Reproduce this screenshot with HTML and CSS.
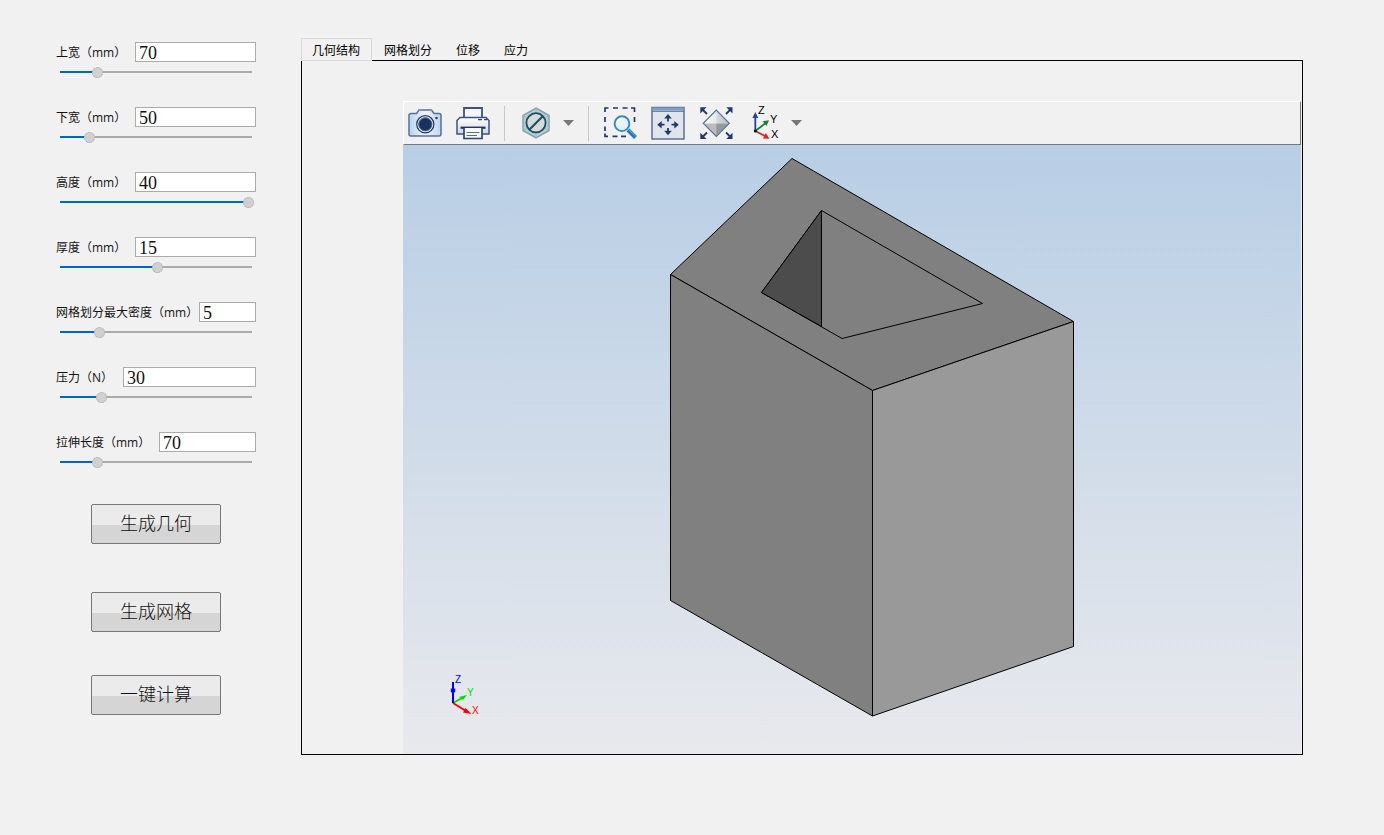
FILE: index.html
```
<!DOCTYPE html>
<html lang="zh-CN">
<head>
<meta charset="utf-8">
<title>几何结构</title>
<link rel="stylesheet" href="styles.css">
</head>
<body>
<div class="app">
  <form class="sidebar">
    <div class="fields">
      <div class="field">
        <div class="row"><label for="top">上宽（mm）</label><input class="value wide" id="top" type="text" value="70"></div>
        <input class="slider" type="range" aria-label="上宽" value="19" style="--v:19">
      </div>
      <div class="field">
        <div class="row"><label for="bottom">下宽（mm）</label><input class="value wide" id="bottom" type="text" value="50"></div>
        <input class="slider" type="range" aria-label="下宽" value="15" style="--v:15">
      </div>
      <div class="field">
        <div class="row"><label for="height">高度（mm）</label><input class="value wide" id="height" type="text" value="40"></div>
        <input class="slider" type="range" aria-label="高度" value="99" style="--v:99">
      </div>
      <div class="field">
        <div class="row"><label for="thick">厚度（mm）</label><input class="value wide" id="thick" type="text" value="15"></div>
        <input class="slider" type="range" aria-label="厚度" value="51" style="--v:51">
      </div>
      <div class="field">
        <div class="row"><label for="mesh">网格划分最大密度（mm）</label><input class="value narrow" id="mesh" type="text" value="5"></div>
        <input class="slider" type="range" aria-label="网格划分最大密度" value="20" style="--v:20">
      </div>
      <div class="field">
        <div class="row"><label for="force">压力（N）</label><input class="value widest" id="force" type="text" value="30"></div>
        <input class="slider" type="range" aria-label="压力" value="21" style="--v:21">
      </div>
      <div class="field">
        <div class="row"><label for="length">拉伸长度（mm）</label><input class="value medium" id="length" type="text" value="70"></div>
        <input class="slider" type="range" aria-label="拉伸长度" value="19" style="--v:19">
      </div>
    </div>
    <div class="actions">
      <button class="action" type="button">生成几何</button>
      <button class="action" type="button">生成网格</button>
      <button class="action compute" type="button">一键计算</button>
    </div>
  </form>

  <main class="main">
    <div class="tabs" role="tablist">
      <button class="tab active" role="tab" aria-selected="true" type="button">几何结构</button>
      <button class="tab" role="tab" type="button">网格划分</button>
      <button class="tab" role="tab" type="button">位移</button>
      <button class="tab" role="tab" type="button">应力</button>
    </div>
    <section class="panel">
      <div class="toolbar">
        <button class="tool" type="button" aria-label="截图">
          <svg viewBox="408 106 34 34">
            <defs><linearGradient id="cam" x1="0" y1="0" x2="1" y2="0"><stop offset="0" stop-color="#b9d3ee"/><stop offset=".5" stop-color="#f0f6fc"/><stop offset="1" stop-color="#bdd5ee"/></linearGradient></defs>
            <path d="M411 113.500H416.500L419 110H431.500L434 113.500H439Q441 113.500 441 115.500V134Q441 136 439 136H411Q409 136 409 134V115.500Q409 113.500 411 113.500Z" fill="url(#cam)" stroke="#5a6f9c" stroke-width="1.500"/>
            <path d="M418.500 110H432" stroke="#8490ae" stroke-width="1.800"/>
            <circle cx="425.300" cy="124.300" r="8.600" fill="#e6eef8" stroke="#1d355f" stroke-width="1.200"/>
            <circle cx="425.300" cy="124.300" r="6.600" fill="#1b315f" stroke="#4a6794"/>
            <circle cx="436.500" cy="118" r="1.300" fill="#2a4172"/>
          </svg>
        </button>
        <button class="tool" type="button" aria-label="打印">
          <svg viewBox="456 106 34 34">
            <defs><linearGradient id="prn" x1="0" y1="0" x2="0" y2="1"><stop offset="0" stop-color="#fff"/><stop offset="1" stop-color="#cfd5df"/></linearGradient></defs>
            <path d="M464 108H482V118H464Z" fill="#f4f7fb" stroke="#3c5180" stroke-width="1.800"/>
            <path d="M460 117.500H486L489 120.500V134H457V120.500Z" fill="url(#prn)" stroke="#3c5180" stroke-width="1.500"/>
            <path d="M460.500 127.700H485.500" stroke="#1f3566" stroke-width="2.200"/>
            <path d="M464 128V138.500H482V128" fill="#f5f7fa" stroke="#2f4574" stroke-width="1.700"/>
            <path d="M466.500 132.500H479.500M466.500 135.500H477" stroke="#5a6d94"/>
            <path d="M478 119.700H482M484 119.700H487" stroke="#33466e" stroke-width="1.200"/>
          </svg>
        </button>
        <span class="sep"></span>
        <div class="split">
          <button class="tool" type="button" aria-label="剪切面">
            <svg viewBox="519 106 34 34">
              <path d="M536 108 549 115.500V130.500L536 138 523 130.500V115.500Z" fill="#bccbd0" stroke="#83a5ac" stroke-width="1.500"/>
              <path d="M536 108V138M523 115.500 549 130.500M549 115.500 523 130.500" stroke="#9bb4ba" stroke-width=".8"/>
              <circle cx="536" cy="122.800" r="9.600" fill="#d7dadd" stroke="#194f62" stroke-width="1.800"/>
              <path d="M529.500 129.500 542.700 116.200" stroke="#194f62" stroke-width="2"/>
            </svg>
          </button>
          <button class="drop" type="button" aria-label="更多"><svg viewBox="0 0 11 6"><path d="M0 0H11L5.500 6Z" fill="#787878"/></svg></button>
        </div>
        <span class="sep"></span>
        <button class="tool" type="button" aria-label="缩放框">
          <svg viewBox="602 106 34 34" fill="none">
            <path d="M604 112V108H607.500M612 108H617M621.500 108H626.500M630 108H633.500V112M604 117V122M604 126.500V131M604 133.500V136.300H607M611.500 136.300H616.500M620 136.300H625M633.500 117V122" stroke="#22396c" stroke-width="1.700"/>
            <path d="M627 130 634.500 137.500" stroke="#2478b6" stroke-width="4"/>
            <path d="M627.500 129.500 634.500 136" stroke="#66afe0" stroke-width="1"/>
            <circle cx="621" cy="123.700" r="7.400" fill="#e5f2fc" stroke="#3589c5" stroke-width="1.900"/>
            <path d="M616.500 123Q617 119 621 118.500" stroke="#fff" stroke-width="1.500"/>
          </svg>
        </button>
        <button class="tool" type="button" aria-label="缩放到窗口">
          <svg viewBox="651 106 34 34">
            <path d="M652 107.500H684V139H652Z" fill="#dfe4ed" stroke="#5f7097" stroke-width="1.500"/>
            <path d="M652.500 107.500H683.500V110.500H652.500Z" fill="#7ba0ce"/>
            <path d="M652 111.300H684" stroke="#526b98"/>
            <path d="M668 121.500V117M668 128V132M664.500 124.700H660M671.500 124.700H676" stroke="#22396c" stroke-width="1.800"/>
            <path d="M668 114 671.800 118.500H664.200ZM668 135.300 671.800 130.800H664.200ZM657.200 124.700 661.700 120.900V128.500ZM678.800 124.700 674.300 120.900V128.500Z" fill="#22396c"/>
          </svg>
        </button>
        <button class="tool" type="button" aria-label="缩放到全部">
          <svg viewBox="699 106 34 34">
            <defs><linearGradient id="dia" x1="0" x2="1"><stop offset="0" stop-color="#fff"/><stop offset="1" stop-color="#b5b9be"/></linearGradient></defs>
            <path d="M716.300 110.500 729 123.500H703.500Z" fill="url(#dia)"/>
            <path d="M703.500 123.500H729L716.300 136Z" fill="#95999e"/>
            <path d="M716.300 111V136L703.500 123.500Z" fill="#fff" opacity=".35"/>
            <path d="M716.300 110.200 729.300 123.300 716.300 136.300 703.300 123.300Z" fill="none" stroke="#56719c" stroke-width="1.200"/>
            <path d="M702 109 707 114M731 109 726 114M702 137.500 707 132.500M731 137.500 726 132.500" stroke="#22396c" stroke-width="1.800"/>
            <path d="M700.300 107.300H706.500L700.300 113.500ZM732.500 107.300H726.300L732.500 113.500ZM700.300 139H706.500L700.300 132.800ZM732.500 139H726.300L732.500 132.800Z" fill="#22396c"/>
          </svg>
        </button>
        <div class="split">
          <button class="tool" type="button" aria-label="视图方向">
            <svg viewBox="747 106 34 34" class="axes">
              <path d="M755.300 131V117" stroke="#2144a0" stroke-width="1.800"/><path d="M755.300 112 758.200 118H752.400Z" fill="#2144a0"/>
              <path d="M755.300 131 765 123.500" stroke="#118334" stroke-width="1.800"/><path d="M769 120.300 766.500 126 762.700 121.300Z" fill="#118334"/>
              <path d="M755.300 131 765 136" stroke="#e6221f" stroke-width="1.800"/><path d="M769.500 138.700 763 138.500 765.800 133Z" fill="#e6221f"/>
              <circle cx="755.300" cy="131" r="1.500" fill="#111"/>
              <text x="758" y="114">Z</text><text x="770" y="123">Y</text><text x="771" y="138">X</text>
            </svg>
          </button>
          <button class="drop" type="button" aria-label="更多视图"><svg viewBox="0 0 11 6"><path d="M0 0H11L5.500 6Z" fill="#787878"/></svg></button>
        </div>
      </div>
      <div class="canvas">
        <svg class="scene" viewBox="403 145 898 609" role="img" aria-label="几何模型">
          <g stroke="#000" stroke-width="1" stroke-linejoin="round">
            <path fill="#808080" d="M792 158.500 1073.500 321.500 872.500 390.500 670.500 274.500Z"/>
            <path fill="#808080" d="M670.500 274.500 872.500 390.500V716L670.500 600.500Z"/>
            <path fill="#999" d="M872.500 390.500 1073.500 321.500V646.500L872.500 716Z"/>
            <path fill="#808080" d="M821.500 210.500 982.500 303.500 842 338.500 761.500 292.500Z"/>
            <path fill="#4c4c4c" d="M821.500 210.500V326.500L761.500 292.500Z"/>
          </g>
          <g class="triad">
            <path d="M453 703 462 698" stroke="#00e000" stroke-width="2"/><path d="M467 695 463 700 459 697Z" fill="#00e000"/>
            <path d="M453 703 466 711" stroke="#f00" stroke-width="2"/><path d="M471.500 714 463 712.500 465.500 708Z" fill="#f00"/>
            <path d="M453 703V682" stroke="#00f" stroke-width="2"/><path d="M450.800 688.500H455.200V691.500L453 694 450.800 691.500Z" fill="#00f"/>
            <text x="455" y="683" fill="#00f">Z</text><text x="467" y="696" fill="#00e000">Y</text><text x="472" y="714" fill="#f00">X</text>
          </g>
        </svg>
      </div>
    </section>
  </main>
</div>
</body>
</html>
```

FILE: styles.css
```
* { box-sizing: border-box; }

body {
  margin: 0;
  background: #f1f1f1;
  color: #111;
  font: 12px/20px "Open Sans", "Noto Sans CJK SC", sans-serif;
}

button, input { font: inherit; color: inherit; margin: 0; }
button { padding: 0; border: 0; background: none; }
svg { display: block; }

.app {
  display: flex;
  gap: 45px;
  min-height: 100vh;
  padding: 38px 81px 80px 56px;
}

.sidebar { flex: 0 0 200px; padding-top: 4px; }
.fields { display: grid; gap: 29px; }
.field { display: grid; gap: 5px; }
.row { display: flex; justify-content: space-between; height: 20px; }
.row label { white-space: nowrap; line-height: 22px; }

.value {
  height: 20px;
  padding: 2px 3px 0;
  border: 1px solid #ababab;
  background: #fff;
  font: 18px/18px "Liberation Serif", serif;
}
.narrow { width: 57px; }
.medium { width: 97px; }
.wide { width: 121px; }
.widest { width: 133px; }

.slider {
  appearance: none;
  width: 100%;
  height: 11px;
  background:
    linear-gradient(#0067c0, #0067c0) 4px 4px / calc(var(--v) * 1.89px) 2px no-repeat,
    linear-gradient(#ababab, #ababab) 4px 4px / calc(100% - 8px) 2px no-repeat;
}
.slider::-webkit-slider-thumb {
  appearance: none;
  width: 11px;
  height: 11px;
  border: 1px dotted #aaa;
  border-radius: 50%;
  background: #d0d0d0;
}

.actions { display: flex; flex-direction: column; margin: 36px 35px 0; gap: 48px; }
.compute { margin-top: -5px; }
.action {
  height: 40px;
  border: 1px solid #777;
  border-radius: 2px;
  background: linear-gradient(#ebebeb 0 53%, #d5d5d5 53%);
  font: 300 18px/38px "Liberation Serif", "Noto Sans CJK SC", serif;
}

.main { flex: 1; min-width: 0; display: flex; flex-direction: column; }
.tabs { display: flex; height: 23px; margin-bottom: -1px; z-index: 1; }
.tab {
  padding: 0 12px;
  line-height: 22px;
  font-family: "Noto Sans CJK SC", sans-serif;
  color: #000;
}
.tab.active { padding: 0 11px 0 10px; border: 1px solid #d9d9d9; background: #f1f1f1; }

.panel {
  flex: 1;
  display: flex;
  flex-direction: column;
  padding: 40px 1px 0 101px;
  border: 1px solid #000;
}

.toolbar {
  display: flex;
  align-items: center;
  gap: 14px;
  height: 44px;
  padding-left: 4px;
  border: 1px solid #777;
  border-top-color: #fff;
  border-left-color: #fff;
}
.tool svg { width: 34px; height: 34px; overflow: visible; }
.split { display: flex; align-items: center; gap: 10px; }
.drop svg { width: 11px; height: 6px; }
.sep { width: 1px; height: 35px; background: #c8c8c8; }
.axes text { font: 11px "Liberation Sans", sans-serif; fill: #000; }

.canvas { flex: 1; display: flex; min-height: 0; background: linear-gradient(#b8cee5, #e8e9ed); }
.scene { flex: 1; min-width: 0; }
.triad text { font: 10px "Liberation Sans", sans-serif; }
```
